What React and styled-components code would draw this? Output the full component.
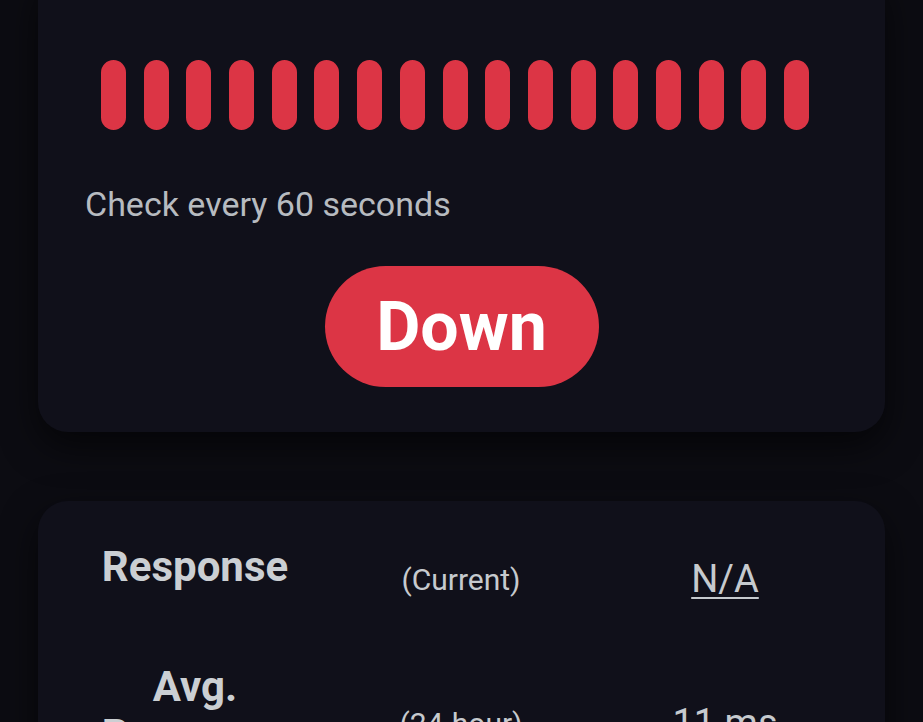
import React from "react";
import styled, { createGlobalStyle } from "styled-components";

const GlobalStyle = createGlobalStyle`
  html, body {
    margin: 0;
    background: #0c0c12;
    font-family: Roboto, "Noto Sans", "Liberation Sans", sans-serif;
    overflow: hidden;
  }
`;

const StyledPage = styled.div`
  display: flex;
  flex-direction: column;
  gap: 69px;
  padding: 0 38px;
`;

const StyledCard = styled.div`
  background: #10101a;
  border-radius: 30px;
  box-shadow: 0 14px 36px rgba(0, 0, 0, 0.6);
`;

const StyledStatusCard = styled(StyledCard)`
  margin-top: -30px;
  padding: 90px 47px 45px;
  display: flex;
  flex-direction: column;
`;

const StyledBeats = styled.div`
  display: flex;
  gap: 17.7px;
  padding-left: 16px;
`;

const StyledBeat = styled.div`
  width: 25px;
  height: 70px;
  border-radius: 13px;
  background: ${(p) => (p.$up ? "#5cdd8b" : "#dc3545")};
`;

const StyledInterval = styled.p`
  margin: 50px 0 0;
  font-size: 34px;
  line-height: 48px;
  color: #b7bbc0;
`;

const StyledBadge = styled.span`
  align-self: center;
  margin-top: 38px;
  width: 274px;
  height: 121px;
  border-radius: 61px;
  background: #dc3545;
  color: #fff;
  font-weight: 700;
  font-size: 68px;
  display: flex;
  align-items: center;
  justify-content: center;
`;

const StyledStatsCard = styled(StyledCard)`
  padding: 6px 67px 40px 62px;
`;

const StyledTable = styled.div`
  display: grid;
  grid-template-columns: 190px 342px 186px;
  align-items: center;
  color: #c6cace;
`;

const StyledHead = styled.div`
  padding: 36px 0;
  text-align: center;
  font-weight: 700;
  font-size: 42px;
  line-height: 48px;
  color: #cbcfd3;
`;

const StyledNote = styled.div`
  padding-top: 24px;
  text-align: center;
  font-size: 30px;
  line-height: 45px;
`;

const StyledValue = styled.div`
  padding-top: 24px;
  text-align: center;
  font-size: 38px;
  line-height: 46px;
  text-decoration: ${(p) => (p.$link ? "underline" : "none")};
  text-underline-offset: 5px;
  text-decoration-thickness: 2px;
`;

const rows = [
  { label: "Response", note: "(Current)", value: "N/A", link: true },
  { label: "Avg. Response", note: "(24-hour)", value: "11 ms" },
  { label: "Uptime", note: "(24-hour)", value: "0%" },
];

function App() {
  const beats = Array.from({ length: 17 });

  return (
    <>
      <GlobalStyle />
      <StyledPage>
        <StyledStatusCard>
          <StyledBeats>
            {beats.map((_, i) => (
              <StyledBeat key={i} />
            ))}
          </StyledBeats>
          <StyledInterval>Check every 60 seconds</StyledInterval>
          <StyledBadge>Down</StyledBadge>
        </StyledStatusCard>
        <StyledStatsCard>
          <StyledTable>
            {rows.map((row) => (
              <React.Fragment key={row.label}>
                <StyledHead>{row.label}</StyledHead>
                <StyledNote>{row.note}</StyledNote>
                <StyledValue $link={row.link}>{row.value}</StyledValue>
              </React.Fragment>
            ))}
          </StyledTable>
        </StyledStatsCard>
      </StyledPage>
    </>
  );
}

export default App;
